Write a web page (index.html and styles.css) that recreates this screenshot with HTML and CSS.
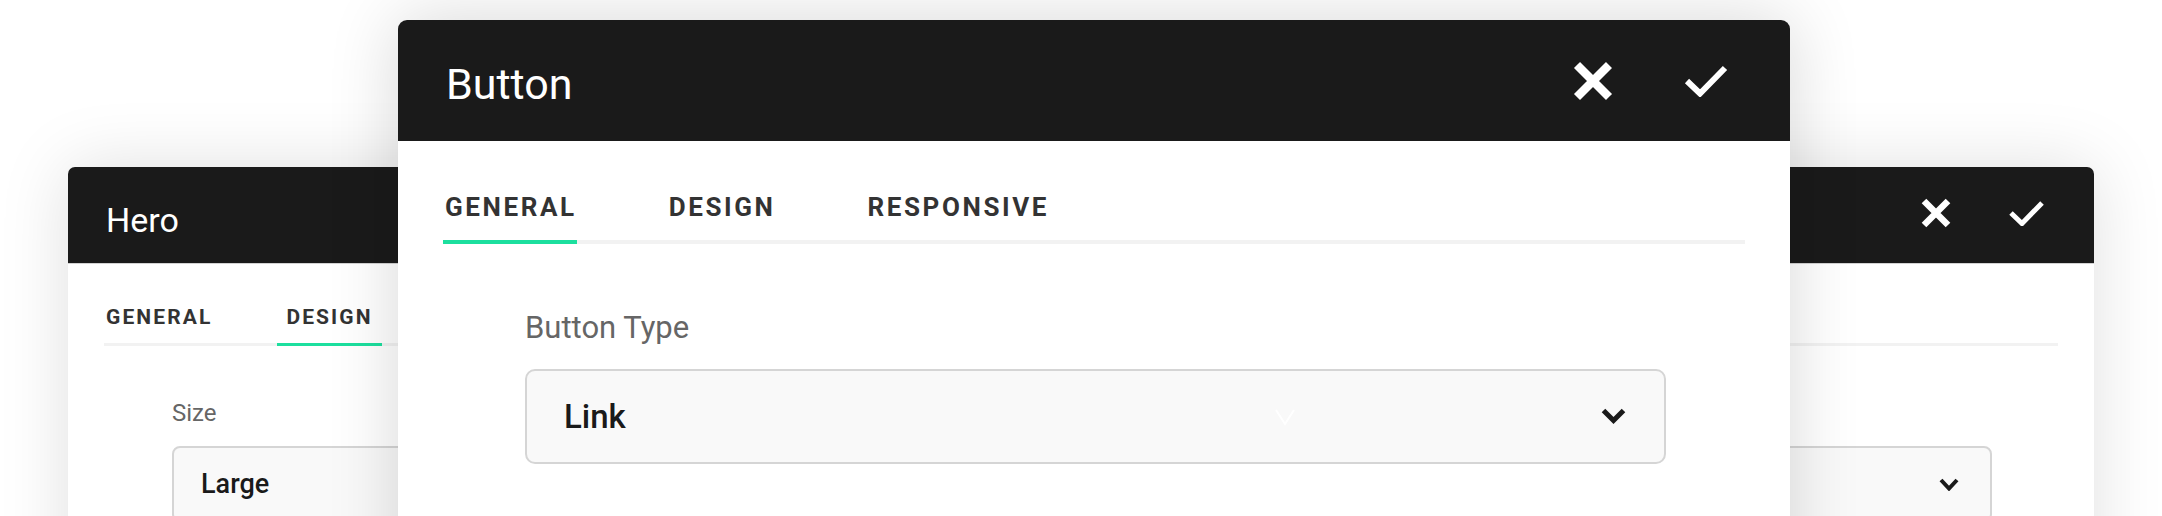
FILE: index.html
```html
<!DOCTYPE html>
<html lang="en">
<head>
<meta charset="utf-8">
<title>Module settings</title>
<link rel="stylesheet" href="styles.css">
</head>
<body>
<div class="desk">
  <section class="window window--hero">
    <header class="hdr">
      <h2 class="hdr-title">Hero</h2>
      <div class="hdr-actions">
        <svg class="ic-x" viewBox="0 0 32 32"><path d="M4 4 L28 28 M28 4 L4 28"/></svg>
        <svg class="ic-check" viewBox="0 0 35 26"><polyline points="2,13 13,23.5 33,3"/></svg>
      </div>
    </header>
    <div class="body">
      <nav class="tabs">
        <span class="tab">General</span>
        <span class="tab is-active">Design</span>
      </nav>
      <div class="field">
        <label class="field-label">Size</label>
        <div class="select">
          <span class="select-value">Large</span>
          <svg class="chev" viewBox="0 0 20 13"><polyline points="2,2 10,10.5 18,2"/></svg>
        </div>
      </div>
    </div>
  </section>

  <section class="window window--button">
    <header class="hdr">
      <h2 class="hdr-title">Button</h2>
      <div class="hdr-actions">
        <svg class="ic-x" viewBox="0 0 42 42"><path d="M5 5 L37 37 M37 5 L5 37"/></svg>
        <svg class="ic-check" viewBox="0 0 44 32"><polyline points="3,16 16,28.5 41,3"/></svg>
      </div>
    </header>
    <div class="body">
      <nav class="tabs">
        <span class="tab is-active">General</span>
        <span class="tab">Design</span>
        <span class="tab">Responsive</span>
      </nav>
      <div class="field">
        <label class="field-label">Button Type</label>
        <div class="select">
          <span class="select-value">Link</span>
          <svg class="ghost-chev" viewBox="0 0 20 17"><polyline points="1,1 10,15 19,1"/></svg>
          <svg class="chev" viewBox="0 0 25 17"><polyline points="2.5,2.5 12.5,12.5 22.5,2.5"/></svg>
        </div>
      </div>
    </div>
  </section>
</div>
</body>
</html>
```

FILE: styles.css
```css
html, body {
  margin: 0;
  height: 516px;
  overflow: hidden;
  background: #ffffff;
}

body {
  font-family: Roboto, "Liberation Sans", sans-serif;
}

.desk {
  position: relative;
  width: 2162px;
  height: 516px;
  overflow: hidden;
}

.window {
  position: absolute;
  display: flex;
  flex-direction: column;
  background: #ffffff;
}

.window--hero {
  left: 68px;
  top: 167px;
  width: 2026px;
  height: 440px;
  border-radius: 7px 7px 0 0;
  box-shadow: 0 0 70px rgba(0, 0, 0, 0.13);
}

.window--button {
  left: 398px;
  top: 20px;
  width: 1392px;
  height: 600px;
  border-radius: 9px 9px 0 0;
  box-shadow: 0 0 70px rgba(0, 0, 0, 0.16);
}

/* header */
.hdr {
  display: flex;
  align-items: center;
  background: #1a1a1a;
  color: #ffffff;
  border-radius: inherit;
  box-sizing: border-box;
}

.hdr-title {
  flex: 1;
  margin: 0;
  font-weight: 400;
}

.hdr-actions {
  display: flex;
  align-items: center;
}

.ic-x path,
.ic-check polyline,
.chev polyline,
.ghost-chev polyline {
  fill: none;
  stroke-linecap: butt;
  stroke-linejoin: miter;
}

.ic-x path,
.ic-check polyline {
  stroke: #ffffff;
}

.window--button .hdr {
  height: 121px;
  padding: 7px 62px 0 48px;
}

.window--button .hdr-title {
  font-size: 43px;
}

.window--button .hdr-actions {
  gap: 70px;
  margin-top: -7px;
}

.window--button .ic-x {
  width: 42px;
  height: 42px;
}

.window--button .ic-x path {
  stroke-width: 8.5;
}

.window--button .ic-check {
  width: 44px;
  height: 32px;
}

.window--button .ic-check polyline {
  stroke-width: 6;
}

.window--hero .hdr {
  height: 97px;
  padding: 9px 50px 0 38px;
  border-bottom: 1px solid #d2d2d2;
}

.window--hero .hdr-title {
  font-size: 34px;
}

.window--hero .hdr-actions {
  gap: 57px;
  margin-top: -14px;
}

.window--hero .ic-x {
  width: 32px;
  height: 32px;
}

.window--hero .ic-x path {
  stroke-width: 6.5;
}

.window--hero .ic-check {
  width: 35px;
  height: 26px;
}

.window--hero .ic-check polyline {
  stroke-width: 5;
}

/* tabs */
.tabs {
  display: flex;
  align-items: flex-end;
}

.tab {
  font-weight: 700;
  text-transform: uppercase;
  color: #333333;
  white-space: nowrap;
}

.window--button .body {
  padding: 51px 45px 0;
}

.window--button .tabs {
  gap: 92px;
  border-bottom: 4px solid #f2f2f2;
}

.window--button .tab {
  font-size: 26px;
  line-height: 30px;
  letter-spacing: 2.6px;
  padding-bottom: 18px;
}

.window--button .tab:first-child {
  padding-left: 2px;
}

.window--button .tab.is-active {
  box-shadow: 0 4px 0 #1cdf9e;
}

.window--hero .body {
  padding: 41px 36px 0;
}

.window--hero .tabs {
  gap: 56px;
  border-bottom: 3px solid #f2f2f2;
}

.window--hero .tab {
  font-size: 21px;
  line-height: 24px;
  letter-spacing: 2.1px;
  padding: 0 9px 14px;
}

.window--hero .tab:first-child {
  padding-left: 2px;
}

.window--hero .tab.is-active {
  box-shadow: 0 3px 0 #1cdf9e;
}

/* field */
.field {
  display: flex;
  flex-direction: column;
}

.field-label {
  color: #666666;
  font-weight: 400;
}

.select {
  position: relative;
  display: flex;
  align-items: center;
  justify-content: space-between;
  box-sizing: border-box;
  background: #f9f9f9;
  border: 2px solid #d5d5d5;
}

.select-value {
  font-weight: 500;
  color: #1a1a1a;
}

.chev polyline {
  stroke: #1a1a1a;
}

.ghost-chev {
  position: absolute;
  left: 748px;
  top: 38px;
  width: 20px;
  height: 17px;
}

.ghost-chev polyline {
  stroke: #ffffff;
  stroke-width: 2;
}

.window--button .field {
  padding: 0 79px 0 82px;
  margin-top: 66px;
}

.window--button .field-label {
  font-size: 31px;
  line-height: 36px;
}

.window--button .select {
  margin-top: 23px;
  height: 95px;
  border-radius: 10px;
  padding: 0 38px 0 37px;
}

.window--button .select-value {
  font-size: 33px;
}

.window--button .chev {
  width: 25px;
  height: 17px;
}

.window--button .chev polyline {
  stroke-width: 5;
}

.window--hero .field {
  padding: 0 66px 0 68px;
  margin-top: 53px;
}

.window--hero .field-label {
  font-size: 24px;
  line-height: 29px;
}

.window--hero .select {
  margin-top: 18px;
  height: 76px;
  border-radius: 8px;
  padding: 0 31px 0 27px;
}

.window--hero .select-value {
  font-size: 27px;
}

.window--hero .chev {
  width: 20px;
  height: 13px;
}

.window--hero .chev polyline {
  stroke-width: 4;
}
```
